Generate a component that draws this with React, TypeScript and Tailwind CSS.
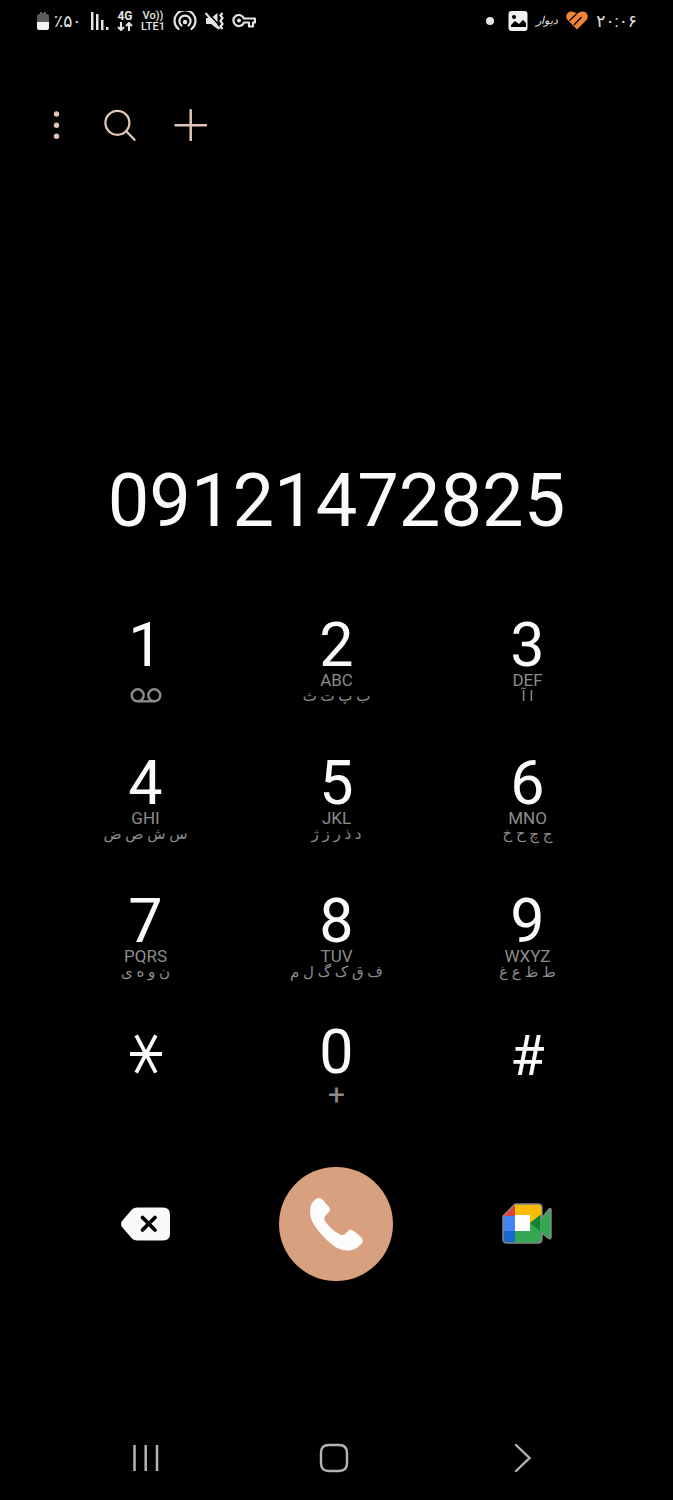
import type { ReactNode } from 'react'

interface DialKey {
  label: string
  symbol: ReactNode
  latin?: string
  persian?: string
}

const keys: DialKey[] = [
  { label: '1, voicemail', symbol: '1' },
  { label: '2', symbol: '2', latin: 'ABC', persian: 'ب پ ت ث' },
  { label: '3', symbol: '3', latin: 'DEF', persian: 'ا آ' },
  { label: '4', symbol: '4', latin: 'GHI', persian: 'س ش ص ض' },
  { label: '5', symbol: '5', latin: 'JKL', persian: 'د ذ ر ز ژ' },
  { label: '6', symbol: '6', latin: 'MNO', persian: 'ج چ ح خ' },
  { label: '7', symbol: '7', latin: 'PQRS', persian: 'ن و ه ی' },
  { label: '8', symbol: '8', latin: 'TUV', persian: 'ف ق ک گ ل م' },
  { label: '9', symbol: '9', latin: 'WXYZ', persian: 'ط ظ ع غ' },
]

function StatusBar() {
  return (
    <header className="flex h-[41px] items-center justify-between px-9 text-[#e4e4e4]">
      <div className="flex items-center gap-2">
        <div className="flex items-center gap-1">
          <svg width="14" height="20" viewBox="0 0 14 20" aria-label="Battery">
            <path d="M4 1h2v1h2V1h2v2h1q2 0 2 2v6H1V5q0-2 2-2h1z" fill="#5c5c5c" />
            <path d="M1 11h12v6q0 2-2 2H3q-2 0-2-2z" fill="#f2f2f2" />
          </svg>
          <span dir="ltr" className="w-7 text-[17px] leading-5 whitespace-nowrap">٪۵۰</span>
        </div>
        <svg width="19" height="18" viewBox="0 0 19 18" fill="currentColor" aria-label="Signal">
          <path d="M1 0h2.500v18H1zM6 2h2.500v16H6zM11 8h2.500v10H11zM16 15h2.500v3H16z" />
        </svg>
        <div className="flex w-4 flex-col items-center">
          <span className="text-xs leading-3 font-bold">4G</span>
          <svg width="16" height="9" viewBox="0 0 16 9" fill="none" stroke="currentColor" strokeWidth="2" aria-hidden="true">
            <path d="M4 0v8M1 5l3 3 3-3M12 9V1M9 4l3-3 3 3" />
          </svg>
        </div>
        <div className="flex w-6 flex-col items-center text-[11px] leading-[11px] font-medium whitespace-nowrap">
          <span>Vo))</span>
          <span>LTE1</span>
        </div>
        <svg width="24" height="20" viewBox="0 0 24 20" fill="none" stroke="currentColor" strokeWidth="2.200" strokeLinecap="round" aria-label="Hotspot">
          <path d="M5.500 18a10.500 10.500 0 1 1 13 0" />
          <path d="M8.500 14.500a5.600 5.600 0 1 1 7 0" />
          <circle cx="12" cy="11" r="2.200" fill="currentColor" stroke="none" />
        </svg>
        <svg width="19" height="20" viewBox="0 0 19 20" aria-label="Vibrate">
          <path d="M1 7h5l6.500-5v16L6 13H1z" fill="currentColor" />
          <path d="M2 1l12 13" stroke="#000" strokeWidth="1.500" />
          <path d="M0.500 2l14 16" stroke="currentColor" strokeWidth="2" />
          <path d="M17.500 2L15.500 4.500l2 2.500-2 3 2 3-2 2.500 2 2.500" fill="none" stroke="currentColor" strokeWidth="2.200" />
        </svg>
        <svg width="24" height="14" viewBox="0 0 24 14" fill="none" stroke="currentColor" strokeWidth="2.200" strokeLinejoin="round" aria-label="VPN">
          <path d="M12 4.500h11v4h-2v4h-4v-4h-5a5.500 5.500 0 1 1 0-4z" />
          <circle cx="7" cy="6.500" r="2" fill="currentColor" stroke="none" />
        </svg>
      </div>

      <div className="flex items-center gap-2">
        <span className="mr-1.5 size-2 rounded-full bg-[#e4e4e4]" />
        <svg width="20" height="20" viewBox="0 0 20 20" aria-label="Picture">
          <rect x="0.500" y="0" width="19" height="20" rx="3" fill="#f0f0f0" />
          <circle cx="6" cy="6" r="2" fill="#000" />
          <path d="M3 16v-2l4-4 4 3 4-4 3 3v4z" fill="#000" />
        </svg>
        <span dir="rtl" className="text-[11px] leading-5 italic">دیوار</span>
        <svg width="22" height="19" viewBox="0 0 22 19" aria-label="Health">
          <path d="M11 18.500L1.800 9.300C-1.500 5.500 1 0.500 5.300 0.500c2.400 0 4.200 1 5.700 2.500 1.500-1.500 3.300-2.500 5.700-2.500 4.300 0 6.800 5 3.500 8.800z" fill="#ee8434" />
          <path d="M3.500 9.500L10.500 3M8 14l7.500-8" fill="none" stroke="#000" strokeWidth="1.300" />
        </svg>
        <time dateTime="20:06" dir="ltr" className="text-[17px] leading-5 whitespace-nowrap">۲۰:۰۶</time>
      </div>
    </header>
  )
}

function Toolbar() {
  return (
    <div className="mt-[68px] flex items-center gap-8 px-10 text-[#e0c6b8]">
      <button type="button" aria-label="More options" className="flex size-8 items-center justify-center">
        <svg width="32" height="32" viewBox="0 0 32 32" fill="currentColor">
          <circle cx="16.500" cy="5" r="2.700" />
          <circle cx="16.500" cy="16.200" r="2.700" />
          <circle cx="16.500" cy="27.300" r="2.700" />
        </svg>
      </button>
      <button type="button" aria-label="Search" className="size-8">
        <svg width="32" height="32" viewBox="0 0 32 32" fill="none" stroke="currentColor" strokeWidth="2.300" strokeLinecap="round">
          <circle cx="13.400" cy="13.800" r="12" />
          <path d="M22.500 22.500l8 8.300" />
        </svg>
      </button>
      <button type="button" aria-label="Add to contacts" className="ml-1.5 size-8">
        <svg width="34" height="32" viewBox="0 0 34 32" fill="none" stroke="currentColor" strokeWidth="2.500" strokeLinecap="round">
          <path d="M16.700 1.200v30M1.500 16.200h30.500" />
        </svg>
      </button>
    </div>
  )
}

function VoicemailIcon() {
  return (
    <svg width="32" height="16" viewBox="0 0 32 16" fill="none" stroke="#8c8c8c" strokeWidth="2.400" className="mt-4">
      <circle cx="7.700" cy="7.300" r="6" />
      <circle cx="24.300" cy="7.300" r="6" />
      <path d="M7.700 13.300h16.600" />
    </svg>
  )
}

function Keypad() {
  return (
    <div className="mt-[81px] grid grid-cols-3 grid-rows-[138px_138px_131px_auto] px-[50px]">
      {keys.map((key) => (
        <button key={key.label} type="button" aria-label={key.label} className="flex flex-col items-center">
          <span className="text-[61px] leading-[54px]">{key.symbol}</span>
          {key.latin ? (
            <>
              <span className="text-[17px] leading-4 text-[#8c8c8c]">{key.latin}</span>
              <span dir="rtl" lang="fa" className="text-[15px] leading-4 whitespace-nowrap text-[#8c8c8c]">{key.persian}</span>
            </>
          ) : (
            <VoicemailIcon />
          )}
        </button>
      ))}
      <button type="button" aria-label="Star" className="flex justify-center pt-2">
        <svg width="34" height="42" viewBox="0 0 34 42" fill="none" stroke="currentColor" strokeWidth="3.800">
          <path d="M1 21h32M7.200 2.300l19.600 37.400M26.800 2.300L7.200 39.700" />
        </svg>
      </button>
      <button type="button" aria-label="0, plus" className="flex flex-col items-center">
        <span className="text-[61px] leading-[54px]">0</span>
        <span className="text-3xl leading-8 text-[#8c8c8c]">+</span>
      </button>
      <button type="button" aria-label="Pound" className="flex justify-center pt-1">
        <span className="text-[56px] leading-[54px]">#</span>
      </button>
    </div>
  )
}

function CallActions() {
  return (
    <div className="mt-14 grid grid-cols-3 items-center justify-items-center pr-[51px] pl-[49px]">
      <button type="button" aria-label="Backspace">
        <svg width="50" height="34" viewBox="0 0 50 34">
          <path d="M17 0.500h26q7 0 7 7v19q0 7-7 7H17q-3 0-5-2L2 20q-2-3 0-6L12 2.500q2-2 5-2z" fill="#fafafa" />
          <path d="M22.500 10.500l12.500 12.500M35 10.500L22.500 23" stroke="#000" strokeWidth="3.800" strokeLinecap="round" />
        </svg>
      </button>
      <button type="button" aria-label="Call" className="flex size-[114px] items-center justify-center rounded-full bg-[#d8a07f]">
        <svg width="54" height="54" viewBox="0 0 54 54" fill="#fcfcfa">
          <path d="M3 6C5 3 7 1 10 1c3 0 5 3 9 8 3 3 2 5 0 7l-2 2c-2 2-2 4-1 6 3 5 9 10 14 13 3 2 5 1 7-1l2-2c2-2 4-1 6 0l7 6c2 2 2 4 1 6-4 5-9 7.500-14 7.500-6 0-11-2-16-6C15 41 7 32 3 24 1 19 0 11 3 6z" />
        </svg>
      </button>
      <button type="button" aria-label="Google Meet video call">
        <svg width="50" height="42" viewBox="0 0 50 42">
          <defs>
            <clipPath id="meet">
              <path d="M13 1h23q4 0 4 4v10l7-9q2-1 2 1v27q0 3-3 1l-6-5v6q0 4-4 4H5q-4 0-4-4V13z" />
            </clipPath>
          </defs>
          <g clipPath="url(#meet)">
            <path d="M0 13h13v16H0z" fill="#4285f4" />
            <path d="M0 28h13v14H0z" fill="#1967d2" />
            <path d="M0 13L13 0v13z" fill="#db4437" />
            <path d="M13 0h27v16L28 21v-8H13z" fill="#fbbc04" />
            <path d="M13 28h15v-8L50 4v38H13z" fill="#34a853" />
            <path d="M28 20l10-8v16z" fill="#188038" />
            <path d="M13 12h15v16H13z" fill="#fff" />
          </g>
          <path d="M13 1h23q4 0 4 4v10l7-9q2-1 2 1v27q0 3-3 1l-6-5v6q0 4-4 4H5q-4 0-4-4V13z" fill="none" stroke="#858585" strokeWidth="1.500" />
        </svg>
      </button>
    </div>
  )
}

function NavigationBar() {
  return (
    <nav className="mt-[161px] flex h-[58px] items-start justify-between pr-[135px] pl-[130px] text-[#b3b3b3]">
      <button type="button" aria-label="Recent apps">
        <svg width="32" height="32" viewBox="0 0 32 32" fill="none" stroke="currentColor" strokeWidth="2.500">
          <path d="M4.500 3v26M15.700 3v26M27 3v26" />
        </svg>
      </button>
      <button type="button" aria-label="Home">
        <svg width="32" height="32" viewBox="0 0 32 32" fill="none" stroke="currentColor" strokeWidth="2.400">
          <path d="M11 3h10q8 0 8 8v10q0 8-8 8H11q-8 0-8-8V11q0-8 8-8z" />
        </svg>
      </button>
      <button type="button" aria-label="Back">
        <svg width="32" height="32" viewBox="0 0 32 32" fill="none" stroke="currentColor" strokeWidth="2.400" strokeLinecap="round">
          <path d="M10 3l13.500 13L10 29" />
        </svg>
      </button>
    </nav>
  )
}

export default function App() {
  return (
    <div className="min-h-screen bg-black font-[Roboto,'DejaVu_Sans',sans-serif] text-[#fafafa]">
      <StatusBar />
      <main>
        <Toolbar />
        <input
          type="tel"
          aria-label="Phone number"
          defaultValue="09121472825"
          className="mt-[322px] block h-[74px] w-full bg-transparent text-center text-[74px] leading-[74px] outline-none"
        />
        <Keypad />
        <CallActions />
      </main>
      <NavigationBar />
    </div>
  )
}
